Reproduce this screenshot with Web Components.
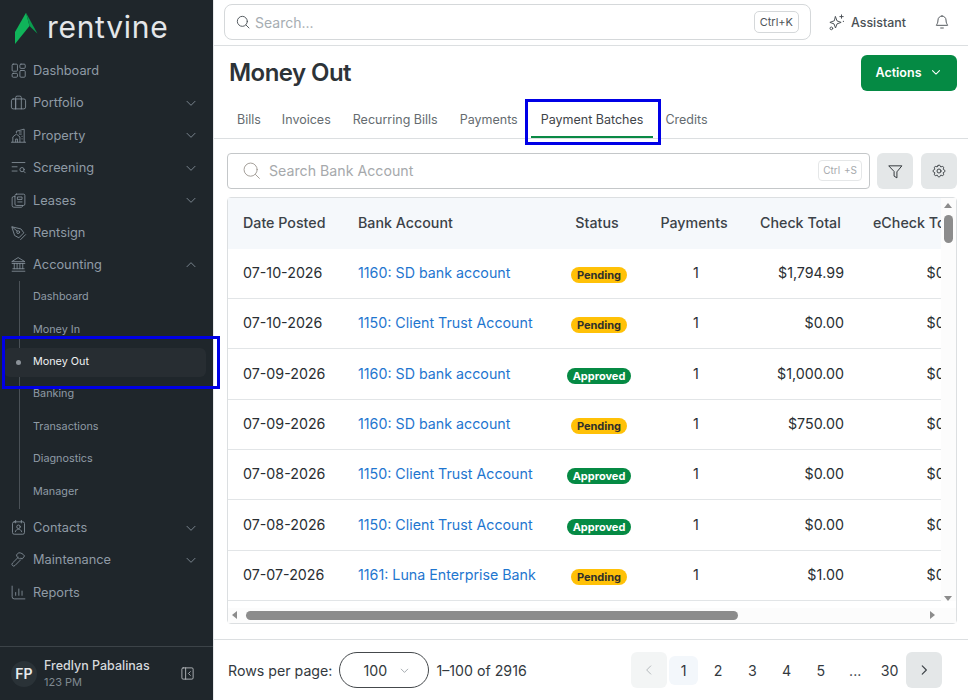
<!DOCTYPE html>
<html lang="en">
<head>
<meta charset="utf-8">
<title>Money Out</title>
<style>
html, body { margin: 0; height: 100%; overflow: hidden; background: #fff; font-family: Inter, "Liberation Sans", sans-serif; }
</style>
</head>
<body>
<rv-app></rv-app>
<script>
const ICONS = {
	dashboard: '<rect x="3" y="3" width="7.5" height="10" rx="1.5"/><rect x="14" y="3" width="7.5" height="6" rx="1.5"/><rect x="3" y="16" width="7.5" height="5.5" rx="1.5"/><rect x="14" y="12" width="7.5" height="9.5" rx="1.5"/>',
	portfolio: '<rect x="2" y="7" width="20" height="14" rx="2.5"/><path d="M8 21V5a2 2 0 0 1 2-2h4a2 2 0 0 1 2 2v16M8 7v14"/>',
	property: '<path d="M2 21.5h20M4 21v-7l5-4 5 4v7M8 21v-4h2.5v4M9 8V6l11-3v18"/><path d="M13 7h3M13 10h3M17 13v.5M17 16.5v.5"/>',
	screening: '<path d="M3 5h18M3 11h7M3 17h7"/><circle cx="17" cy="15" r="3"/><path d="M19.5 17.5l2 2"/>',
	leases: '<rect x="7" y="3" width="14" height="16" rx="2"/><path d="M7 6.5H5a2 2 0 0 0-2 2V19a2.5 2.5 0 0 0 2.5 2.5H16a2.5 2.5 0 0 0 2-2.5M11 7h6v3.5h-6zM11 14h6"/>',
	rentsign: '<path d="M3 4l12.5 3 4 5.5-7 7L7 16.5z"/><circle cx="11.5" cy="11.5" r="2"/><path d="M3.5 4.5l6.5 5.5M15 22l7-7"/>',
	accounting: '<path d="M3 21.5h18M4 18h16M12 2.5l9 5.5H3zM3 10.5h18M6 10.5V18M10 10.5V18M14 10.5V18M18 10.5V18"/>',
	contacts: '<rect x="3.5" y="4" width="17" height="17.5" rx="2.5"/><path d="M8 2v3.5M16 2v3.5"/><circle cx="12" cy="11" r="2.5"/><path d="M7.5 18c.5-2.5 2.5-3.5 4.5-3.5s4 1 4.5 3.5"/>',
	maintenance: '<path d="M9.5 5l3-2.5c3 0 6 1.5 8 4.5l-3 4-2.5-1-1.5 1.5-3-3z"/><path d="M11.5 9L3.5 17a2 2 0 0 0 3.5 3.5l8-8"/>',
	reports: '<path d="M3 3v15a3 3 0 0 0 3 3h15"/><path d="M8 16v-4M12.5 16V7M17 16v-6"/>',
	collapse: '<rect x="3" y="3" width="18" height="18" rx="2"/><path d="M9 3v18M16.5 9l-3 3 3 3"/>',
	chevron: '<path d="M6 9.5l6 6 6-6"/>',
	left: '<path d="M15 5l-7 7 7 7"/>',
	right: '<path d="M9 5l7 7-7 7"/>',
	search: '<circle cx="11" cy="11" r="7.5"/><path d="M16.5 16.5L21 21"/>',
	sparkle: '<path d="M10 5l2 5.5 5.5 2-5.5 2-2 5.5-2-5.5-5.5-2 5.5-2z"/><path d="M18 2.5V7M15.8 4.8h4.5"/><circle cx="4.5" cy="20.5" r="1.8"/><path d="M20.5 11v.5"/>',
	bell: '<path d="M12 3a6 6 0 0 0-6 6c0 5-2 6.5-2.5 8h17c-.5-1.5-2.5-3-2.5-8a6 6 0 0 0-6-6z"/><path d="M10 21h4"/>',
	filter: '<path d="M3 4h18l-7 8.5V21l-4-2.5v-6z"/>',
	gear: '<path d="M10.3 4.3c.4-1.8 3-1.8 3.4 0a1.7 1.7 0 0 0 2.6 1.1c1.5-.9 3.3.8 2.4 2.4a1.7 1.7 0 0 0 1 2.5c1.8.4 1.8 3 0 3.4a1.7 1.7 0 0 0-1 2.6c.9 1.5-.9 3.3-2.4 2.4a1.7 1.7 0 0 0-2.6 1c-.4 1.8-3 1.8-3.4 0a1.7 1.7 0 0 0-2.6-1c-1.5.9-3.3-.9-2.4-2.4a1.7 1.7 0 0 0-1-2.6c-1.8-.4-1.8-3 0-3.4a1.7 1.7 0 0 0 1-2.5c-.9-1.6.9-3.3 2.4-2.4a1.7 1.7 0 0 0 2.6-1.1z"/><circle cx="12" cy="12" r="3"/>'
};
function icon(name, size, width) {
	return `<svg viewBox="0 0 24 24" width="${size}" height="${size}" fill="none" stroke="currentColor" stroke-width="${width || 1.5}" stroke-linecap="round" stroke-linejoin="round" aria-hidden="true">${ICONS[name]}</svg>`;
}

class RvNavItem extends HTMLElement {
	constructor() {
		super();
		this.attachShadow({ mode: "open" });
		let ic = this.getAttribute("icon");
		let arrow = this.getAttribute("arrow");
		this.shadowRoot.innerHTML = `<style>
:host { display: flex; align-items: center; height: 32.4px; color: #8f9ba6; font-size: 12.8px; box-sizing: border-box; padding-left: 10px; padding-right: 14px; }
.ic { width: 23px; display: flex; color: #87929c; }
.label { flex: 1; }
.ar { display: flex; color: #87929c; }
</style>
<span class="ic">${icon(ic, 17, 1.2)}</span><span class="label"><slot></slot></span>${arrow ? `<span class="ar" style="${arrow == "up" ? "transform:rotate(180deg)" : ""}">${icon("chevron", 16, 1.3)}</span>` : ""}`;
	}
}
customElements.define("rv-nav-item", RvNavItem);

class RvSubItem extends HTMLElement {
	constructor() {
		super();
		this.attachShadow({ mode: "open" });
		this.shadowRoot.innerHTML = `<style>
:host { display: flex; align-items: center; height: 32.4px; font-size: 10.8px; color: #8f9ba6; padding-left: 33px; position: relative; }
:host([active]) { color: #eef1f3; }
:host([active])::before { content: ""; position: absolute; left: 4px; right: 7px; top: 2.5px; bottom: 1px; background: #272d32; border-radius: 6px; }
:host([active])::after { content: ""; position: absolute; left: 16px; top: 14.5px; width: 5px; height: 5px; border-radius: 50%; background: #8b9299; }
span { position: relative; }
</style><span><slot></slot></span>`;
	}
}
customElements.define("rv-sub-item", RvSubItem);

class RvSidebar extends HTMLElement {
	constructor() {
		super();
		this.attachShadow({ mode: "open" });
		this.shadowRoot.innerHTML = `<style>
:host { display: flex; flex-direction: column; width: 213px; height: 700px; flex: none; background: #1f262b; box-sizing: border-box; }
.logo { display: flex; align-items: center; height: 54.4px; padding-left: 15px; gap: 9px; color: #e4e6e9; font-weight: 400; font-size: 30px; letter-spacing: .7px; }
.logo span { margin-top: -1px; }
.logo svg { flex: none; margin-top: 1px; }
nav { flex: 1; }
.sub { position: relative; margin-bottom: 4px; margin-top: -.5px; }
.sub::before { content: ""; position: absolute; left: 19px; top: 0; bottom: -2px; width: 1px; background: #4a5157; }
.user { height: 54px; box-sizing: border-box; border-top: 1px solid #3c4348; display: flex; align-items: center; padding: 0 18px 0 11px; }
.av { width: 26px; height: 26px; border-radius: 50%; background: #2a3237; color: #e8eaec; font-size: 14px; font-weight: 600; display: flex; align-items: center; justify-content: center; margin-right: 7px; }
.who { flex: 1; margin-top: 1px; }
.name { font-size: 12.5px; font-weight: 500; color: #d6d9dc; line-height: 16px; }
.org { font-size: 11px; color: #7f8990; line-height: 16px; }
.col { display: flex; color: #c5c9cc; }
</style>
<div class="logo"><svg width="23" height="32" viewBox="0 0 23 32"><path d="M11 .7L0 20V32L14.5 14z" fill="#10b45a"/><path d="M11 .7L22.5 21.7 14.5 14z" fill="#0a9c4e"/></svg><span>rentvine</span></div>
<nav>
<rv-nav-item icon="dashboard">Dashboard</rv-nav-item>
<rv-nav-item icon="portfolio" arrow="down">Portfolio</rv-nav-item>
<rv-nav-item icon="property" arrow="down">Property</rv-nav-item>
<rv-nav-item icon="screening" arrow="down">Screening</rv-nav-item>
<rv-nav-item icon="leases" arrow="down">Leases</rv-nav-item>
<rv-nav-item icon="rentsign">Rentsign</rv-nav-item>
<rv-nav-item icon="accounting" arrow="up">Accounting</rv-nav-item>
<div class="sub">
<rv-sub-item>Dashboard</rv-sub-item>
<rv-sub-item>Money In</rv-sub-item>
<rv-sub-item active>Money Out</rv-sub-item>
<rv-sub-item>Banking</rv-sub-item>
<rv-sub-item>Transactions</rv-sub-item>
<rv-sub-item>Diagnostics</rv-sub-item>
<rv-sub-item>Manager</rv-sub-item>
</div>
<rv-nav-item icon="contacts" arrow="down">Contacts</rv-nav-item>
<rv-nav-item icon="maintenance" arrow="down">Maintenance</rv-nav-item>
<rv-nav-item icon="reports">Reports</rv-nav-item>
</nav>
<div class="user"><div class="av">FP</div><div class="who"><div class="name">Fredlyn Pabalinas</div><div class="org">123 PM</div></div><span class="col">${icon("collapse", 15, 1.3)}</span></div>`;
	}
}
customElements.define("rv-sidebar", RvSidebar);

class RvTopbar extends HTMLElement {
	constructor() {
		super();
		this.attachShadow({ mode: "open" });
		this.shadowRoot.innerHTML = `<style>
:host { display: flex; align-items: center; height: 46px; box-sizing: border-box; border-bottom: 1px solid #dcdfe1; padding: 0 18px 1px 10px; flex: none; }
.box { width: 587px; height: 36px; box-sizing: border-box; border: 1px solid #d5d8da; border-radius: 8px; display: flex; align-items: center; padding: 0 11px 0 10px; color: #a6adb2; font-size: 14px; }
.box svg { color: #4b5257; margin-right: 4px; }
.ph { flex: 1; }
kbd { font: 11px Inter, sans-serif; color: #4e5459; border: 1px solid #d5d8da; border-radius: 5px; padding: 4px 5px; line-height: 12px; }
.ast { display: flex; align-items: center; margin-left: 17px; font-size: 12.4px; color: #4a5055; font-weight: 500; gap: 5px; flex: 1; }
.bell { display: flex; color: #4a5055; }
</style>
<div class="box">${icon("search", 16, 1.4)}<span class="ph">Search...</span><kbd>Ctrl+K</kbd></div>
<div class="ast">${icon("sparkle", 18, 1.3)}<span>Assistant</span></div>
<span class="bell">${icon("bell", 16, 1.4)}</span>`;
	}
}
customElements.define("rv-topbar", RvTopbar);

class RvTabs extends HTMLElement {
	constructor() {
		super();
		this.attachShadow({ mode: "open" });
		this.shadowRoot.innerHTML = `<style>
:host { display: flex; gap: 2px; height: 38px; box-sizing: border-box; border-bottom: 1px solid #dcdfe1; padding-left: 13px; flex: none; }
</style><slot></slot>`;
	}
}
customElements.define("rv-tabs", RvTabs);

class RvTab extends HTMLElement {
	constructor() {
		super();
		this.attachShadow({ mode: "open" });
		this.shadowRoot.innerHTML = `<style>
:host { display: flex; align-items: center; height: 37px; box-sizing: border-box; padding: 0 10px 0; font-size: 12.5px; color: #656b70; }
:host([active]) { color: #3e4449; box-shadow: inset 0 -2px 0 #0a8a45; }
</style><slot></slot>`;
	}
}
customElements.define("rv-tab", RvTab);

class RvBadge extends HTMLElement {
	constructor() {
		super();
		this.attachShadow({ mode: "open" });
		this.shadowRoot.innerHTML = `<style>
:host { display: inline-block; font-size: 11px; font-weight: 700; line-height: 16px; padding: 0 6px; border-radius: 8px; background: #ffc107; color: #30302a; }
:host([kind="approved"]) { background: #058a44; color: #fff; }
</style><slot></slot>`;
	}
}
customElements.define("rv-badge", RvBadge);

const COLUMNS = "115px 210px 88px 106px 110px 124px";
class RvRow extends HTMLElement {
	constructor() {
		super();
		this.attachShadow({ mode: "open" });
		let d = this.dataset;
		let status = d.status;
		this.shadowRoot.innerHTML = `<style>
:host { display: grid; grid-template-columns: ${COLUMNS}; height: 50.3px; box-sizing: border-box; padding-bottom: 1.6px; border-bottom: 1px solid #e2e5e7; align-items: center; font-size: 14.25px; color: #292e32; white-space: nowrap; }
.date { padding-left: 15px; }
.bank { padding-left: 15px; color: #1f76cf; }
.st { text-align: center; padding: 3px 0 0 4px; }
.pay { text-align: center; padding-left: 4px; }
.num { text-align: right; padding-right: 13px; }
.e { padding-right: 15px; }
</style>
<div class="date">${d.date}</div><div class="bank">${d.bank}</div>
<div class="st"><rv-badge kind="${status.toLowerCase()}">${status}</rv-badge></div>
<div class="pay">1</div><div class="num">${d.total}</div><div class="num e">$0.00</div>`;
	}
}
customElements.define("rv-row", RvRow);

class RvTable extends HTMLElement {
	constructor() {
		super();
		this.attachShadow({ mode: "open" });
		this.shadowRoot.innerHTML = `<style>
:host { display: grid; grid-template-columns: 713px 15px; grid-template-rows: 403px 1fr; width: 730px; height: 427px; box-sizing: border-box; border: 1px solid #dcdfe1; border-radius: 4px; flex: none; background: #fff; }
.view { overflow: hidden; grid-column: 1; grid-row: 1; }
.head { display: grid; grid-template-columns: ${COLUMNS}; height: 50.8px; box-sizing: border-box; padding-bottom: 2px; align-items: center; background: #f5f8fb; font-size: 14.25px; font-weight: 500; color: #3c4248; white-space: nowrap; }
.head div:nth-child(-n+2) { padding-left: 15px; }
.head .c { text-align: center; }
.head .r { padding-left: 13px; }
.head .l { padding-left: 16px; }
.vbar { background: #fcfcfc; position: relative; grid-column: 2; grid-row: 1; }
.hbar { background: #fcfcfc; position: relative; grid-column: 1 / span 2; grid-row: 2; margin-top: 7px; }
.thumb { position: absolute; background: #8c8c8c; border-radius: 5px; }
.a { position: absolute; width: 0; height: 0; border: 5px solid transparent; }
</style>
<div class="view">
<div class="head"><div>Date Posted</div><div>Bank Account</div><div class="c">Status</div><div class="c">Payments</div><div class="r">Check Total</div><div class="l">eCheck Total</div></div>
<slot></slot>
</div>
<div class="vbar">
<div class="a" style="left:3px;top:5px;border-bottom:5px solid #8c8c8c;border-top:0;border-left-width:4.5px;border-right-width:4.5px"></div>
<div class="thumb" style="left:3px;width:9px;top:17px;height:28px"></div>
<div class="a" style="left:3px;top:398px;border-top:5px solid #8c8c8c;border-bottom:0;border-left-width:4.5px;border-right-width:4.5px"></div></div>
<div class="hbar">
<div class="a" style="left:4px;top:3px;border-right:5px solid #8c8c8c;border-left:0;border-top-width:4.5px;border-bottom-width:4.5px"></div>
<div class="thumb" style="left:18px;width:492px;top:3px;height:9px"></div>
<div class="a" style="left:702px;top:3px;border-left:5px solid #8c8c8c;border-right:0;border-top-width:4.5px;border-bottom-width:4.5px"></div></div>`;
	}
}
customElements.define("rv-table", RvTable);

class RvPager extends HTMLElement {
	constructor() {
		super();
		this.attachShadow({ mode: "open" });
		let pages = ["1", "2", "3", "4", "5", "...", "30"];
		this.shadowRoot.innerHTML = `<style>
:host { display: flex; align-items: center; height: 61px; box-sizing: border-box; border-top: 1px solid #dcdfe1; padding: 0 26px 0 14px; font-size: 14.2px; color: #33393e; flex: none; }
.sel { width: 90px; height: 36px; box-sizing: border-box; border: 1px solid #45494c; border-radius: 18px; margin: 0 7px 0 7px; display: flex; align-items: center; padding-left: 23px; gap: 11px; }
.sel svg { color: #8b9298; }
.sp { flex: 1; }
.btn { width: 36px; height: 36px; border-radius: 6px; background: #e4e7e8; display: flex; align-items: center; justify-content: center; color: #3c4247; }
.btn.off { background: #f3f5f5; color: #b4b9bc; margin-right: 2.5px; }
.p { width: 29px; height: 29px; margin-right: 5.3px; border-radius: 6px; display: flex; align-items: center; justify-content: center; }
.p.end { margin-right: 2px; }
.p.on { background: #f3f7fb; }
</style>
<span>Rows per page:</span><div class="sel"><span>100</span>${icon("chevron", 13, 1.4)}</div><span>1–100 of 2916</span><span class="sp"></span>
<div class="btn off">${icon("left", 14, 1.7)}</div>${pages.map((p, i) => `<div class="p ${i == 0 ? "on" : ""} ${i == 6 ? "end" : ""}">${p}</div>`).join("")}<div class="btn">${icon("right", 14, 2)}</div>`;
	}
}
customElements.define("rv-pager", RvPager);

class RvMain extends HTMLElement {
	constructor() {
		super();
		this.attachShadow({ mode: "open" });
		this.shadowRoot.innerHTML = `<style>
:host { display: flex; flex-direction: column; flex: 1; min-width: 0; height: 700px; border-left: 1px solid #e6e8ea; }
.title { display: flex; align-items: flex-start; justify-content: space-between; height: 55px; box-sizing: border-box; padding: 9px 11px 0 15px; flex: none; }
h1 { margin: 2px 0 0; font-size: 24px; line-height: 32px; font-weight: 600; color: #2d3338; letter-spacing: -.55px; }
.act { width: 96px; height: 36px; box-sizing: border-box; padding-bottom: 2px; background: #058a44; border-radius: 6px; color: #fff; font-size: 12.5px; font-weight: 600; display: flex; align-items: center; justify-content: center; gap: 7px; }
.tools { display: flex; gap: 8px; padding: 14px 11px 8px 13px; height: 36px; flex: none; }
.find { flex: 1; box-sizing: border-box; height: 36px; border: 1px solid #c4c7c9; border-radius: 4px; display: flex; align-items: center; padding: 0 7px 1px 13px; color: #a6a9ac; font-size: 14.2px; gap: 7px; margin-right: -1px; }
.find svg { color: #a19c96; }
.find span { flex: 1; }
.find kbd { font: 10px Inter, sans-serif; color: #a6a9ac; border: 1px solid #e5e7e8; border-radius: 4px; padding: 4px 4px; line-height: 11px; word-spacing: 1px; }
.tb { width: 36px; height: 36px; border-radius: 6px; background: #e4e7e8; display: flex; align-items: center; justify-content: center; color: #34393d; }
.wrap { padding-left: 13px; flex: 1; min-height: 0; }
</style>
<rv-topbar></rv-topbar>
<div class="title"><h1>Money Out</h1><div class="act"><span>Actions</span>${icon("chevron", 14, 1.8)}</div></div>
<rv-tabs><rv-tab style="padding-right:9px">Bills</rv-tab><rv-tab>Invoices</rv-tab><rv-tab>Recurring Bills</rv-tab><rv-tab style="padding-right:11px">Payments</rv-tab><rv-tab active>Payment Batches</rv-tab><rv-tab>Credits</rv-tab></rv-tabs>
<div class="tools"><div class="find">${icon("search", 21, 1.1)}<span>Search Bank Account</span><kbd>Ctrl +S</kbd></div><div class="tb">${icon("filter", 17, 1.4)}</div><div class="tb">${icon("gear", 16, 1.4)}</div></div>
<div class="wrap"><rv-table>
<rv-row data-date="07-10-2026" data-bank="1160: SD bank account" data-status="Pending" data-total="$1,794.99"></rv-row>
<rv-row data-date="07-10-2026" data-bank="1150: Client Trust Account" data-status="Pending" data-total="$0.00"></rv-row>
<rv-row data-date="07-09-2026" data-bank="1160: SD bank account" data-status="Approved" data-total="$1,000.00"></rv-row>
<rv-row data-date="07-09-2026" data-bank="1160: SD bank account" data-status="Pending" data-total="$750.00"></rv-row>
<rv-row data-date="07-08-2026" data-bank="1150: Client Trust Account" data-status="Approved" data-total="$0.00"></rv-row>
<rv-row data-date="07-08-2026" data-bank="1150: Client Trust Account" data-status="Approved" data-total="$0.00"></rv-row>
<rv-row data-date="07-07-2026" data-bank="1161: Luna Enterprise Bank" data-status="Pending" data-total="$1.00"></rv-row>
</rv-table></div>
<rv-pager></rv-pager>`;
	}
}
customElements.define("rv-main", RvMain);

class RvApp extends HTMLElement {
	constructor() {
		super();
		this.attachShadow({ mode: "open" });
		this.shadowRoot.innerHTML = `<style>
:host { display: flex; position: relative; width: 968px; height: 700px; overflow: hidden; }
.mark { position: absolute; border: 3px solid #0000e6; box-sizing: border-box; pointer-events: none; }
</style>
<rv-sidebar></rv-sidebar><rv-main></rv-main>
<div class="mark" style="left:2px;top:336px;width:218px;height:53px"></div>
<div class="mark" style="left:525px;top:99px;width:136px;height:46px"></div>`;
	}
}
customElements.define("rv-app", RvApp);
</script>
</body>
</html>
